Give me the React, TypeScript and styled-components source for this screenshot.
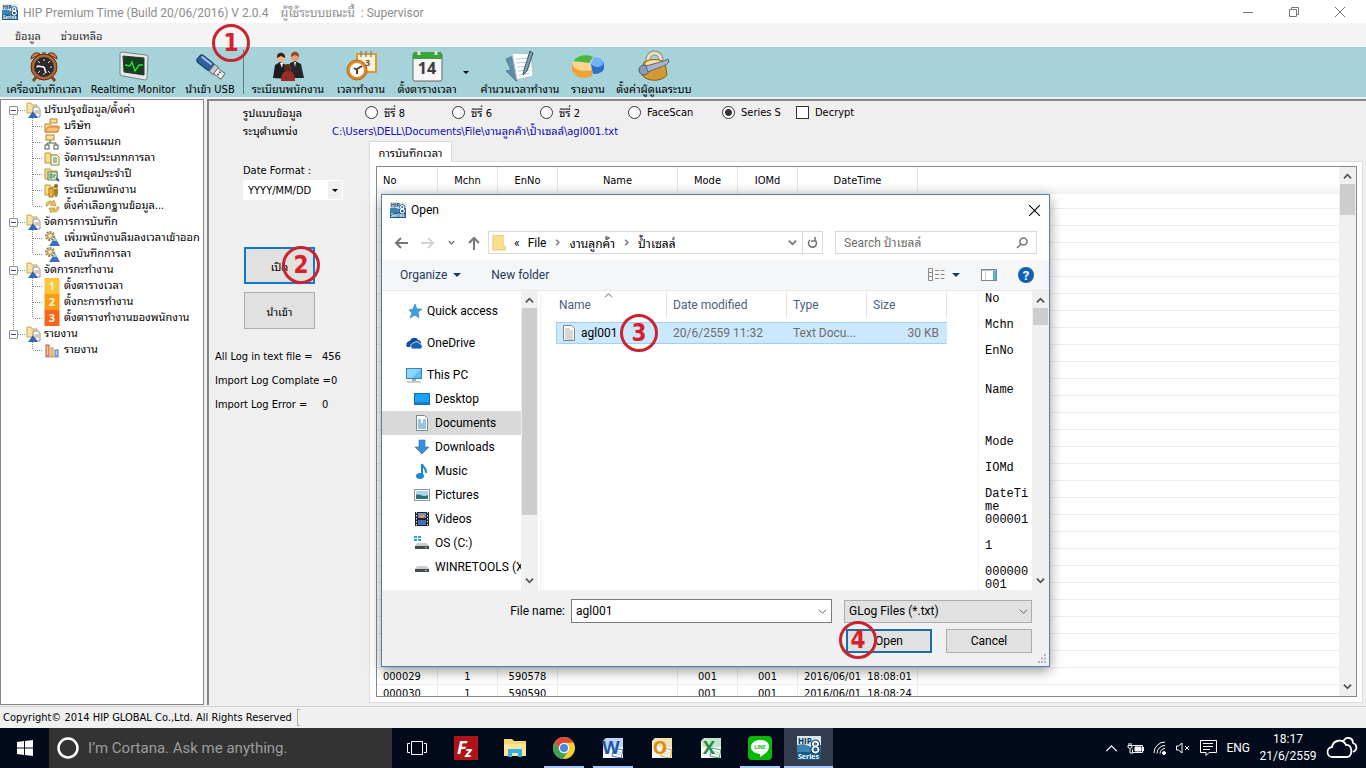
import React, { ReactNode } from "react";
import styled, { createGlobalStyle, css } from "styled-components";

const tahoma = `"DejaVu Sans Condensed", Tahoma, "Noto Sans Thai Looped", Loma, Waree, sans-serif`;
const segoe = `Roboto, "Segoe UI", "Noto Sans Thai Looped", Loma, Waree, sans-serif`;

const GlobalStyle = createGlobalStyle`
  * { box-sizing: border-box; }
  body { margin: 0; font-family: ${tahoma}; font-size: 11px; color: #000; background: #f0f0f0; }
  button, input, select { font: inherit; color: inherit; margin: 0; }
  ul { list-style: none; margin: 0; padding: 0; }
  svg { display: block; flex: none; }
`;

/* ---------- application frame ---------- */

const Desktop = styled.div`
  position: relative;
  display: flex;
  flex-direction: column;
  height: 100vh;
  min-height: 600px;
  overflow: hidden;
`;

const TitleBar = styled.header`
  display: flex;
  align-items: center;
  height: 23px;
  padding-left: 2px;
  gap: 5px;
  background: #fff;
  color: #8c8c8c;
  font-family: ${segoe};
  font-size: 12px;
  white-space: pre;
`;

const WindowButtons = styled.div`
  display: flex;
  margin-left: auto;
  padding-right: 3px;
`;

const WindowButton = styled.button`
  display: grid;
  place-items: center;
  width: 46px;
  height: 23px;
  padding: 0;
  border: 0;
  background: none;
`;

const MenuBar = styled.nav`
  display: flex;
  align-items: center;
  height: 24px;
  padding-left: 15px;
  gap: 20px;
  background: #f4f4f4;
`;

const MenuItem = styled.button`
  padding: 0;
  border: 0;
  background: none;
  color: #333;
  white-space: nowrap;
`;

const ToolBar = styled.div`
  display: flex;
  height: 50px;
  background: #a5d3d9;
`;

const Tool = styled.button<{ $w: number }>`
  position: relative;
  display: flex;
  flex-direction: column;
  align-items: center;
  flex: none;
  width: ${(p) => p.$w}px;
  height: 50px;
  padding: 3px 0 0;
  gap: 1px;
  border: 0;
  background: none;
  line-height: 14px;
  white-space: nowrap;
`;

const ToolSeparator = styled.div`
  width: 1px;
  margin: 3px 1px;
  background: #5c7f84;
`;

const ToolArrow = styled.button`
  width: 10px;
  height: 50px;
  padding: 0;
  border: 0;
  background: none;
`;

const Badge = styled.span<{ $x: number; $y: number }>`
  position: absolute;
  left: ${(p) => p.$x}px;
  top: ${(p) => p.$y}px;
  display: grid;
  place-items: center;
  width: 38px;
  height: 38px;
  border: 3px solid #c9242f;
  border-radius: 50%;
  color: #d8202a;
  font: bold 24px/30px "DejaVu Sans Condensed", sans-serif;
  z-index: 5;
`;

const Workspace = styled.div`
  display: flex;
  flex: 1;
  min-height: 0;
  gap: 3px;
  padding-top: 2px;
`;

const Side = styled.aside`
  flex: none;
  width: 204px;
  overflow: hidden;
  padding-top: 2px;
  background: #fff;
  border: 1px solid #828790;
`;

/* ---------- tree ---------- */

const dotsV = "repeating-linear-gradient(to bottom, #8c8c8c 0 1px, transparent 1px 2px)";
const dotsH = "repeating-linear-gradient(to right, #8c8c8c 0 1px, transparent 1px 2px)";

const TreeRow = styled.li<{ $child?: boolean }>`
  display: flex;
  align-items: center;
  height: 16px;
  line-height: 16px;
  white-space: nowrap;
  svg { margin-right: ${(p) => (p.$child ? 4 : 3)}px; }
`;

const Trunk = styled.span<{ $end?: boolean; $none?: boolean; $start?: boolean }>`
  display: grid;
  align-items: center;
  flex: none;
  width: 24px;
  height: 16px;
  padding-left: 8px;
  background: ${(p) => (p.$none ? "none" : `${dotsV} 12px ${p.$start ? 8 : 0}px / 1px ${p.$end ? 8 : 16}px no-repeat, ${dotsH} 17px 8px / ${p.$start !== undefined ? 7 : 0}px 1px no-repeat`)};
`;

const Branch = styled.span<{ $last?: boolean }>`
  flex: none;
  width: 19px;
  height: 16px;
  background: ${dotsV} 7px 0 / 1px ${(p) => (p.$last ? 8 : 16)}px no-repeat, ${dotsH} 8px 8px / 10px 1px no-repeat;
`;

const Toggle = styled.button`
  display: grid;
  place-items: center;
  width: 9px;
  height: 9px;
  padding: 0;
  border: 1px solid #919191;
  border-radius: 1px;
  background: #fff;
  &::before { content: ""; width: 5px; height: 1px; background: #3a4a78; }
`;

/* ---------- import panel ---------- */

const MainPanel = styled.main`
  display: flex;
  flex-direction: column;
  flex: 1;
  min-width: 0;
  border: solid #828790;
  border-width: 2px 0 0 2px;
  background: #efefef;
`;

const OptionRow = styled.div`
  display: flex;
  align-items: center;
  height: 22px;
  padding-left: 34px;
`;

const RowTitle = styled.span<{ $w: number }>`
  flex: none;
  width: ${(p) => p.$w}px;
  white-space: nowrap;
`;

const Choice = styled.label<{ $w: number }>`
  display: flex;
  align-items: center;
  gap: 6px;
  flex: none;
  width: ${(p) => p.$w}px;
  white-space: nowrap;
`;

const Radio = styled.input`
  appearance: none;
  width: 13px;
  height: 13px;
  border: 1px solid #333;
  border-radius: 50%;
  background: #fff;
  &:checked { background: radial-gradient(circle, #333 0 3px, #fff 4px); }
`;

const Check = styled.input`
  appearance: none;
  width: 13px;
  height: 13px;
  border: 1px solid #333;
  background: #fff;
`;

const PathRow = styled.div`
  display: flex;
  align-items: center;
  height: 14px;
  padding-left: 34px;
  white-space: nowrap;
`;

const PathText = styled.span`
  color: #0a0ab4;
`;

const Columns = styled.div`
  display: flex;
  flex: 1;
  min-height: 0;
  padding-top: 4px;
`;

const Controls = styled.section`
  display: flex;
  flex-direction: column;
  flex: none;
  width: 160px;
  padding: 23px 0 0 34px;
`;

const DateSelect = styled.select`
  appearance: none;
  width: 100px;
  height: 20px;
  margin: 3px 0 47px;
  padding: 0 4px;
  border: 1px solid #fff;
  border-radius: 0;
  background: linear-gradient(to right, transparent 84px, #f0f0f0 84px) #fff;
`;

const SelectWrap = styled.span`
  position: relative;
  display: flex;
  svg { position: absolute; pointer-events: none; }
`;

const BigButton = styled.button<{ $focus?: boolean }>`
  position: relative;
  width: 71px;
  height: 37px;
  margin: 0 0 8px 1px;
  padding: 0;
  border: ${(p) => (p.$focus ? "2px solid #0f78d0" : "1px solid #adadad")};
  background: #e1e1e1;
  white-space: nowrap;
`;

const Stats = styled.div`
  display: flex;
  flex-direction: column;
  gap: 10px;
  margin: 13px 0 0 -28px;
  line-height: 14px;
`;

const Stat = styled.div`
  display: flex;
  white-space: pre;
  span { min-width: 107px; }
`;

const TabArea = styled.section`
  display: flex;
  flex-direction: column;
  flex: 1;
  min-width: 0;
  padding-right: 3px;
`;

const Tab = styled.button`
  align-self: flex-start;
  width: 83px;
  height: 21px;
  padding: 0;
  margin-bottom: -1px;
  border: 1px solid #d9d9d9;
  border-bottom: 0;
  background: #fff;
  white-space: nowrap;
  z-index: 1;
`;

const TabBody = styled.div`
  flex: 1;
  min-height: 0;
  padding: 4px 5px 5px 6px;
  border: 1px solid #dcdcdc;
  background: #fff;
  display: flex;
  margin-bottom: 2px;
`;

const GridBox = styled.div`
  display: flex;
  flex: 1;
  min-width: 0;
  border: 1px solid #828790;
  background: #fff;
  overflow: hidden;
`;

const GridScroll = styled.div`
  flex: 1;
  min-width: 0;
  overflow: hidden;
`;

const LogTable = styled.table`
  width: 100%;
  table-layout: fixed;
  border-collapse: separate;
  border-spacing: 0;
  th {
    height: 27px;
    padding: 0 6px;
    border-right: 1px solid #e2e2e2;
    background: linear-gradient(#fff 60%, #f1f1f1);
    font-weight: normal;
    text-align: center;
  }
  td {
    height: 17px;
    padding: 1px 6px 0;
    border-right: 1px solid #ececec;
    border-bottom: 1px solid #ececec;
    line-height: 15px;
    text-align: center;
    white-space: pre;
  }
  tbody tr:first-child td { height: 15px; }
  th:first-child, td:first-child { text-align: left; }
  th:last-child, td:last-child { border-right: 0; }
`;

const ScrollTrack = styled.div`
  display: flex;
  flex-direction: column;
  align-items: center;
  flex: none;
  width: 17px;
  background: #f0f0f0;
  padding: 5px 0;
`;

const Thumb = styled.div<{ $h: number }>`
  width: 15px;
  height: ${(p) => p.$h}px;
  margin: 3px 0 auto;
  background: #cdcdcd;
`;

const StatusBar = styled.footer`
  display: flex;
  align-items: center;
  height: 22px;
  margin-top: 1px;
  padding-left: 3px;
  border-top: 1px solid #d0d0d0;
  white-space: nowrap;
  &::after { content: ""; width: 2px; height: 15px; margin-left: 5px; border: solid #aaa; border-width: 1px 0 1px 1px; }
`;

/* ---------- open dialog ---------- */

const Dialog = styled.section`
  position: absolute;
  left: 381px;
  top: 194px;
  display: flex;
  flex-direction: column;
  width: 669px;
  height: 473px;
  border: 1px solid #4f7fb8;
  background: #fff;
  box-shadow: 0 4px 12px rgba(0, 0, 0, 0.4);
  font-family: ${segoe};
  font-size: 12px;
  z-index: 3;
`;

const DialogTitle = styled.div`
  display: flex;
  align-items: center;
  height: 30px;
  padding: 0 9px 0 8px;
  gap: 5px;
`;

const PlainButton = styled.button`
  display: flex;
  align-items: center;
  gap: 6px;
  padding: 0;
  border: 0;
  background: none;
  white-space: nowrap;
`;

const CloseButton = styled(PlainButton)`
  margin-left: auto;
`;

const NavRow = styled.div`
  display: flex;
  align-items: center;
  height: 35px;
  padding: 0 12px;
`;

const NavArrows = styled.div`
  display: flex;
  align-items: center;
  width: 94px;
  gap: 13px;
`;

const AddressBar = styled.div`
  display: flex;
  align-items: center;
  flex: 1;
  height: 23px;
  padding-left: 3px;
  gap: 8px;
  border: 1px solid #d9d9d9;
  white-space: nowrap;
`;

const AddressTail = styled.div`
  display: flex;
  align-items: center;
  height: 21px;
  margin-left: auto;
  button { width: 20px; height: 21px; justify-content: center; }
  button + button { border-left: 1px solid #d9d9d9; }
`;

const SearchBox = styled.label`
  display: flex;
  align-items: center;
  width: 202px;
  height: 23px;
  margin-left: 12px;
  padding: 0 8px;
  border: 1px solid #d9d9d9;
  input { flex: 1; min-width: 0; padding: 0; border: 0; outline: 0; background: none; }
  input::placeholder { color: #6d6d6d; opacity: 1; }
`;

const CommandBar = styled.div`
  display: flex;
  align-items: center;
  height: 31px;
  padding: 0 15px 0 18px;
  gap: 30px;
  background: #f5f6f7;
  border-bottom: 1px solid #e8e8e8;
  color: #1e395b;
`;

const CommandIcons = styled.div`
  display: flex;
  align-items: center;
  margin-left: auto;
  gap: 21px;
`;

const DialogBody = styled.div`
  display: flex;
  flex: 1;
  min-height: 0;
`;

const Places = styled.ul`
  flex: none;
  width: 139px;
  padding-top: 8px;
  overflow: hidden;
`;

const Place = styled.li<{ $sub?: boolean; $on?: boolean; $gap?: boolean }>`
  display: flex;
  align-items: center;
  height: 24px;
  margin-bottom: ${(p) => (p.$gap ? 8 : 0)}px;
  padding-left: ${(p) => (p.$sub ? 32 : 24)}px;
  gap: 5px;
  background: ${(p) => (p.$on ? "#d9d9d9" : "none")};
  white-space: nowrap;
`;

const FilesPane = styled.div`
  flex: 1;
  min-width: 0;
  margin-left: 2px;
  padding-left: 15px;
  border-left: 1px solid #f0f0f0;
`;

const FileTable = styled.table`
  width: 391px;
  table-layout: fixed;
  border-collapse: separate;
  border-spacing: 0;
  th {
    position: relative;
    height: 27px;
    padding: 0 6px;
    border-right: 1px solid #e5e5e5;
    color: #4c607a;
    font-weight: normal;
    text-align: left;
  }
  th:first-child { padding-left: 3px; }
  th svg { position: absolute; left: 48px; top: 0; }
  tbody::before { content: ""; display: block; height: 4px; }
`;

const FileCell = styled.td<{ $pos?: "first" | "last"; $dark?: boolean }>`
  position: relative;
  height: 22px;
  padding: 0 6px;
  border: solid #99d1ff;
  border-width: 1px 0;
  ${(p) => p.$pos === "first" && css`border-left-width: 1px; padding-left: 4px;`}
  ${(p) => p.$pos === "last" && css`text-align: right; padding-right: 8px;`}
  background: #cce8ff;
  color: ${(p) => (p.$dark ? "#000" : "#6d6d6d")};
  white-space: nowrap;
`;

const FileName = styled.span`
  display: flex;
  align-items: center;
  gap: 4px;
`;

const Preview = styled.pre`
  flex: none;
  width: 54px;
  margin: 0;
  padding: 2px 0 0 6px;
  border-left: 1px solid #f0f0f0;
  overflow: hidden;
  font: 12px/13px "Liberation Mono", monospace;
`;

const DialogFooter = styled.div`
  position: relative;
  display: grid;
  grid-template-columns: 1fr 261px 188px;
  column-gap: 12px;
  row-gap: 6px;
  align-items: center;
  align-content: start;
  height: 76px;
  padding: 9px 17px 0 0;
  background: #f0f0f0;
`;

const FieldLabel = styled.label`
  justify-self: end;
  margin-right: -6px;
`;

const Combo = styled.div`
  display: flex;
  align-items: center;
  height: 24px;
  padding-right: 4px;
  border: 1px solid #7a7a7a;
  background: #fff;
  input { flex: 1; min-width: 0; height: 20px; padding: 0 4px; border: 0; outline: 0; background: none; }
`;

const TypeSelect = styled.select`
  appearance: none;
  width: 188px;
  height: 23px;
  padding: 0 4px;
  border: 1px solid #adadad;
  border-radius: 0;
  background: #e1e1e1;
`;

const DialogActions = styled.div`
  grid-column: 3;
  display: flex;
  justify-content: flex-end;
  gap: 14px;
`;

const DialogButton = styled.button<{ $main?: boolean }>`
  position: relative;
  width: 86px;
  height: 24px;
  padding: 0;
  border: ${(p) => (p.$main ? "2px solid #1a6ea8" : "1px solid #adadad")};
  background: #e1e1e1;
`;

const Grip = styled.span`
  position: absolute;
  right: 2px;
  bottom: 2px;
`;

/* ---------- task bar ---------- */

const TaskBar = styled.footer`
  display: flex;
  flex: none;
  height: 40px;
  background: #020a1c;
  color: #fff;
  font-family: ${segoe};
`;

const TaskButton = styled.button<{ $active?: boolean; $running?: boolean }>`
  display: grid;
  place-items: center;
  flex: none;
  width: 49px;
  height: 40px;
  padding: 0;
  border: 0;
  background: ${(p) =>
    p.$active
      ? "linear-gradient(to top, #a9c9f5 2px, #333d4f 2px)"
      : p.$running
      ? "linear-gradient(#a9c9f5, #a9c9f5) center bottom / 40px 2px no-repeat"
      : "none"};
`;

const Cortana = styled.label`
  display: flex;
  align-items: center;
  flex: none;
  width: 343px;
  padding-left: 8px;
  gap: 9px;
  background: #333;
  font-size: 15px;
  input { flex: 1; min-width: 0; border: 0; padding: 0; outline: 0; background: none; }
  input::placeholder { color: #9c9c9c; opacity: 1; }
`;

const Tray = styled.div`
  display: flex;
  align-items: center;
  margin-left: auto;
  padding-right: 8px;
  gap: 9px;
  font-size: 12px;
`;

const Clock = styled.time`
  width: 58px;
  line-height: 17px;
  text-align: center;
`;

/* ---------- icons ---------- */

const HipIcon = ({ size = 16 }: { size?: number }) => (
  <svg width={size} height={size} viewBox="0 0 24 24">
    <rect width="24" height="24" fill="#155a8c" />
    <path d="M0 0h24v9c-9 0-10 7-24 6z" fill="#d8e8f2" />
    <path d="M0 9c8-2 10 0 14 2s7 1 10 0v5H0z" fill="#3d84b4" />
    <text x="1" y="8" fontFamily="Open Sans, sans-serif" fontWeight="bold" fontSize="8" fill="#0b2f52">HIP</text>
    <g fill="none" strokeLinecap="round">
      <path d="M18.500 5.500a2.500 2.500 0 1 1-.1 0zM18.500 10.500a3 3 0 1 1-.1 0z" stroke="#0b3d66" strokeWidth="4" />
      <path d="M18.500 5.500a2.500 2.500 0 1 1-.1 0zM18.500 10.500a3 3 0 1 1-.1 0z" stroke="#fff" strokeWidth="2" />
    </g>
    <text x="1" y="23" fontFamily="Open Sans, sans-serif" fontWeight="bold" fontSize="7" fill="#fff">Series</text>
  </svg>
);

const Chevron = ({ dir = "down", color = "#555", size = 9, w = 2 }: { dir?: "up" | "down" | "right"; color?: string; size?: number; w?: number }) => (
  <svg width={size} height={size} viewBox="0 0 10 10" fill="none" stroke={color} strokeWidth={w}>
    <path d={dir === "up" ? "M1 7l4-4 4 4" : dir === "down" ? "M1 3l4 4 4-4" : "M3 1l4 4-4 4"} />
  </svg>
);

const Caret = ({ color = "#000", w = 6 }: { color?: string; w?: number }) => (
  <svg width={w} height={w / 2} viewBox="0 0 6 3"><path d="M0 0h6L3 3z" fill={color} /></svg>
);

const Cross = ({ size, color }: { size: number; color: string }) => (
  <svg width={size} height={size} viewBox="0 0 10 10" stroke={color} fill="none"><path d="M0 0l10 10M10 0L0 10" /></svg>
);

const toolIcons: Record<string, ReactNode> = {
  clock: (
    <svg width="32" height="32" viewBox="0 0 32 32">
      <path d="M9 26l-4 5M23 26l4 5" stroke="#8a4a24" strokeWidth="3" />
      <path d="M3 9c0-5 5-8 9-5zM29 9c0-5-5-8-9-5z" fill="#c9804c" stroke="#653417" />
      <path d="M14 2h4v3h-4z" fill="#777" />
      <circle cx="16" cy="17" r="13" fill="#b5652f" stroke="#5c2b12" />
      <circle cx="16" cy="17" r="10" fill="#2b2b2e" />
      <path d="M16 9v2M16 23v2M8 17h2M22 17h2M10 11l2 2M22 11l-2 2M10 23l2-2M22 23l-2-2" stroke="#ddd" />
      <path d="M16 17l-7-1M16 17l2 6" stroke="#fff" strokeWidth="1.600" />
    </svg>
  ),
  monitor: (
    <svg width="32" height="32" viewBox="0 0 32 32">
      <path d="M5 2l24 3q2 0 2 2l-1 21q0 2-2 2L6 26q-3 0-3-2L3 4q0-2 2-2z" fill="#e4e8ea" stroke="#7b8184" />
      <path d="M6 6l21 2 0 17-20-3z" fill="#163f20" stroke="#333" />
      <path d="M8 15l5 1 2-4 3 9 4-6 4 0" fill="none" stroke="#27e03a" strokeWidth="1.400" />
    </svg>
  ),
  usb: (
    <svg width="32" height="32" viewBox="0 0 32 32">
      <g transform="rotate(38 16 17)">
        <rect x="1" y="12" width="17" height="9" rx="3" fill="#2f5f9f" stroke="#1a3b6d" />
        <path d="M3 14h13" stroke="#9fc0e8" strokeWidth="2" />
        <rect x="18" y="12" width="5" height="9" fill="#c8ccd0" stroke="#777" />
        <rect x="23" y="13" width="9" height="7" fill="#f2f4f5" stroke="#777" />
        <path d="M26 15h2M26 18h2" stroke="#555" strokeWidth="1.500" />
      </g>
    </svg>
  ),
  people: (
    <svg width="32" height="32" viewBox="0 0 32 32">
      <circle cx="9" cy="8" r="4" fill="#f0b48c" /><path d="M5 8c-1-7 9-7 8 0l-4-2z" fill="#3a2013" />
      <circle cx="23" cy="7" r="4" fill="#e8a070" /><path d="M19 7c-1-7 9-7 8 0l-4-2z" fill="#9c4a20" />
      <path d="M1 28l2-13 5-3 6 3 2 14z" fill="#1c1c20" /><path d="M17 28l1-15 5-2 6 3 3 14z" fill="#24242a" />
      <path d="M8 13l2 5 1-5zM22 12l1 5 1-5z" fill="#fff" />
      <circle cx="16" cy="18" r="4" fill="#5a2c1c" /><path d="M9 31c0-8 3-10 7-10s7 2 7 10z" fill="#962c22" />
    </svg>
  ),
  time: (
    <svg width="32" height="32" viewBox="0 0 32 32">
      <rect x="12" y="4" width="19" height="18" fill="#fff4d6" stroke="#d89b38" strokeWidth="2" />
      <path d="M16 1v6M21 1v6M26 1v6" stroke="#888" strokeWidth="1.500" />
      <text x="20" y="16" fontSize="9" fontWeight="bold" fontFamily="Open Sans, sans-serif" fill="#555">3</text>
      <circle cx="12" cy="20" r="10" fill="#e08a2c" stroke="#b26518" /><circle cx="12" cy="20" r="7" fill="#fff" />
      <path d="M12 24l0-5 5-3M12 20l-3-2" stroke="#444" strokeWidth="2" fill="none" />
    </svg>
  ),
  calendar: (
    <svg width="32" height="32" viewBox="0 0 32 32">
      <rect x="2" y="3" width="29" height="28" rx="2" fill="#f6f6f6" stroke="#666" />
      <path d="M2 9V4q0-2 2-2h25q2 0 2 2v5z" fill="#3aa33a" />
      <path d="M8 1v4M25 1v4" stroke="#ddd" strokeWidth="3" />
      <text x="16" y="24" textAnchor="middle" fontSize="16" fontWeight="bold" fontFamily="Open Sans, sans-serif" fill="#3c3c3c">14</text>
    </svg>
  ),
  notes: (
    <svg width="32" height="32" viewBox="0 0 32 32">
      <path d="M2 9l12-5 4 24-6 3-10-10 5-1z" fill="#5f8fa8" stroke="#3c6b85" strokeWidth=".7" />
      <path d="M8 3l19 1 2 22-16 4z" fill="#fff" stroke="#b5c1c8" />
      <path d="M12 9l13-1M12 13l13-1M13 17l13-1M14 21l12-1M15 25l11-2" stroke="#b5ccd8" />
      <path d="M26 1l-6 19-1 5 4-4L29 3z" fill="#7d9db5" stroke="#38556b" />
    </svg>
  ),
  pie: (
    <svg width="32" height="32" viewBox="0 0 32 32">
      <path d="M0 13v7c3 9 14 9 20 6v-8z" fill="#eea23c" /><path d="M0 12c1 9 12 10 20 8l-3-8z" fill="#ffd490" />
      <path d="M2 11c3-6 14-7 19-4l-4 6z" fill="#4db63e" />
      <path d="M19 14l13-2v7c-2 4-6 5-11 5z" fill="#2c6fc9" /><path d="M19 14l3-7c9 0 12 7 7 9-3 2-7 1-10-2z" fill="#70b2f5" />
    </svg>
  ),
  admin: (
    <svg width="32" height="32" viewBox="0 0 32 32">
      <path d="M10 12C9 0 24 0 23 12" fill="none" stroke="#8b8b80" strokeWidth="5" />
      <path d="M10 12C9 0 24 0 23 12" fill="none" stroke="#e9e0c0" strokeWidth="3" />
      <path d="M6 12q10-5 21 0l2 13c-5 7-20 7-25 0z" fill="#d49a32" stroke="#8a5a12" />
      <path d="M8 12q8-4 17 0l1 5H7z" fill="#f9e2a0" />
      <circle cx="6" cy="20" r="5" fill="#8d9bb5" stroke="#4d5a75" /><path d="M8 16l18-5 4-2 1 3-3 3-18 7z" fill="#aab3c4" stroke="#5a6478" />
    </svg>
  ),
};

const Folder = () => <path d="M1 3h5l1 2h6v8H1z" fill="#f7dc8a" stroke="#c79435" />;

const treeIcons: Record<string, ReactNode> = {
  root: <><path d="M2 1h4l1 2h5v8H2z" fill="#f9e3a0" stroke="#d0a050" /><path d="M8 5h5l2 2v8H8z" fill="#f2f5fb" stroke="#8a94a8" /><path d="M10 9h4M10 11h4" stroke="#d99a40" /><path d="M8 9l5 7H3z" fill="#3568b4" /></>,
  company: <><rect x="6" y="1" width="7" height="4" fill="#fbe08a" stroke="#b8862c" /><path d="M1 6h5l1 2h7v6H1z" fill="#f9dd90" stroke="#c98030" /><path d="M1 14l3-5h12l-3 5z" fill="#fbc070" stroke="#c98030" /></>,
  dept: <><rect x="2" y="1" width="8" height="5" fill="#fbe38a" stroke="#a8863c" /><path d="M6 6v3M3 11V9h9v2" stroke="#555" fill="none" /><rect x="1" y="11" width="4" height="4" fill="#fff" stroke="#555" /><rect x="10" y="11" width="4" height="4" fill="#fff" stroke="#555" /></>,
  leave: <><Folder /><path d="M7 5h6l2 2v8H7z" fill="#fffbe0" stroke="#8a8448" /><path d="M9 8h4M9 10h4M9 12h4" stroke="#3f8a48" /></>,
  holiday: <><Folder /><rect x="4" y="6" width="9" height="8" fill="#e4f4e4" stroke="#52834f" /><path d="M6 8h2v4H6zM9 9h3M9 11h2" stroke="#2e7a3a" fill="none" /><path d="M12 12l3 3" stroke="#36609c" strokeWidth="2" /></>,
  staff: <><Folder /><path d="M5 6h4v9H5z" fill="#efb63c" stroke="#a8701c" /><circle cx="12" cy="4" r="2" fill="#8a6a20" /><path d="M10 7h4v4l-1 4h-2l-1-4z" fill="#a8822c" /></>,
  db: <path d="M2 8c0-5 4-6 7-4l1-2 2 6-6-1 2-2C5 5 4 6 4 8zM15 9c0 5-4 6-7 4l-1 2-2-5 6 0-2 2c3 0 4-1 4-3z" fill="#f2c55c" stroke="#b88a30" strokeWidth=".7" />,
  gear: <><circle cx="6" cy="6" r="4" fill="none" stroke="#a08448" strokeWidth="2" strokeDasharray="2 1" /><circle cx="6" cy="6" r="2.500" fill="#fff2c8" stroke="#a08448" /><path d="M11 7l5 9H5z" fill="#3d6fb8" /><path d="M11 7l2 4H9z" fill="#a8c4e8" /></>,
  chart: <><path d="M1 15h14" stroke="#999" /><rect x="2" y="3" width="3" height="11" fill="#f4c0a8" stroke="#c05030" /><rect x="7" y="6" width="2" height="8" fill="#fde4a0" stroke="#c89038" /><rect x="11" y="8" width="3" height="6" fill="#c0d0f0" stroke="#5570b0" /></>,
};

const numberColors: Record<string, string> = { "1": "#fdc53a", "2": "#fb9a14", "3": "#f3661c" };

const TreeIcon = ({ name }: { name: string }) => (
  <svg width="16" height="16" viewBox="0 0 16 16">
    {treeIcons[name] ?? (
      <>
        <rect width="15" height="16" x=".5" fill={numberColors[name]} />
        <text x="8" y="12" textAnchor="middle" fontSize="11" fontFamily="Open Sans, sans-serif" fontWeight="bold" fill="#fff4d8">{name}</text>
      </>
    )}
  </svg>
);

const placeIcons: Record<string, ReactNode> = {
  star: <path d="M9 1l2 5 5 0-4 3 1 6-4-3-5 3 2-5-3-3 4-1z" fill="#3a9fe0" stroke="#1f7fc4" strokeWidth=".6" />,
  cloud: <><path d="M1 12c-2-4 1-6 3-6 1-4 7-4 8-1 2 0 3 2 3 3v4z" fill="#0f4fa0" /><path d="M6 14c-3-4 0-6 2-6 1-2 5-2 6 1 3 0 3 5 0 5z" fill="#1a5fb8" stroke="#fff" strokeWidth=".8" /></>,
  pc: <><rect x=".5" y="1.500" width="15" height="10" fill="#5cc0f8" stroke="#3a85b8" /><path d="M1 2h14L6 11H1z" fill="#8bd6ff" /><path d="M6 12h4v2H6z" fill="#9ab" /><path d="M1 15h14" stroke="#99a" /></>,
  desktop: <><rect x=".5" y="2.500" width="15" height="11" fill="#1ea0f4" stroke="#0c6fb8" /><path d="M1 12h14" stroke="#0c5f9c" /></>,
  doc: <><path d="M2.500 .5h8l3 3v12h-11z" fill="#fff" stroke="#7b8790" /><path d="M4 5h3M4 7h3M4 9h8M4 11h8M4 13h8M9 5h3M9 7h3" stroke="#2e8ab8" /></>,
  down: <path d="M5 1h6v7h4l-7 7-7-7h4z" fill="#3a8fd8" stroke="#2a72b4" strokeWidth=".6" />,
  music: <><ellipse cx="6" cy="13" rx="4" ry="3" fill="#1a88d8" /><path d="M8 13V1c1 4 5 4 4 9" fill="none" stroke="#1a88d8" strokeWidth="2" /></>,
  pic: <><rect x=".5" y="2.500" width="15" height="11" fill="#fff" stroke="#8796a4" /><path d="M2 4h12v8H2z" fill="#a8d4ee" /><path d="M2 8c4-2 6 3 12 0v4H2z" fill="#2f6f78" /></>,
  video: <><rect x="1" y="1" width="14" height="14" fill="#222" /><path d="M4 2h8v5H4z" fill="#6a8fd8" /><path d="M4 9h8v5H4z" fill="#3d6cc0" /><path d="M6 4h4v3H6z" fill="#d8a03c" /><path d="M2.500 1v14M13.500 1v14" stroke="#ddd" strokeDasharray="1.500 1.500" /></>,
  os: <><path d="M0 1h3v2H0zM4 1h3v2H4zM0 4h3v2H0zM4 4h3v2H4z" fill="#1fa8e8" /><path d="M3 8h10l2 3H1z" fill="#c9cdd0" /><path d="M1 11h14v3H1z" fill="#44494d" /><path d="M11 12.500h2" stroke="#5ee04c" /></>,
  drive: <><path d="M3 7h10l2 3H1z" fill="#c9cdd0" /><path d="M1 10h14v3H1z" fill="#44494d" /><path d="M11 11.500h2" stroke="#bbb" /></>,
};

const PlaceIcon = ({ name }: { name: string }) => <svg width="16" height="16" viewBox="0 0 16 16">{placeIcons[name]}</svg>;

const NavArrow = ({ d, color, w = 14 }: { d: string; color: string; w?: number }) => (
  <svg width={w} height="14" viewBox={`0 0 ${w} 14`} fill="none" stroke={color} strokeWidth="2"><path d={d} /></svg>
);

const OfficeIcon = ({ letter, color, pale }: { letter: string; color: string; pale: string }) => (
  <svg width="24" height="24" viewBox="0 0 24 24">
    <path d="M5 2h17v20H2V5z" fill="#f5f7fa" /><path d="M3 4l3-2h16v9H3z" fill={pale} opacity=".6" />
    <path d="M13 12l9 2-2 8-9-2z" fill="#fff" stroke={color} strokeWidth=".8" /><path d="M15 15l5 2M14 17l5 2" stroke={pale} />
    <text x="10" y="18" textAnchor="middle" fontSize="18" fontWeight="bold" fontFamily="Open Sans, sans-serif" fill={color}>{letter}</text>
  </svg>
);

/* ---------- data ---------- */

type TreeNode = { icon: string; text: string };
const tree: { text: string; items: TreeNode[] }[] = [
  { text: "ปรับปรุงข้อมูล/ตั้งค่า", items: [
    { icon: "company", text: "บริษัท" }, { icon: "dept", text: "จัดการแผนก" }, { icon: "leave", text: "จัดการประเภทการลา" },
    { icon: "holiday", text: "วันหยุดประจำปี" }, { icon: "staff", text: "ระเบียนพนักงาน" }, { icon: "db", text: "ตั้งค่าเลือกฐานข้อมูล..." } ] },
  { text: "จัดการการบันทึก", items: [{ icon: "gear", text: "เพิ่มพนักงานลืมลงเวลาเข้าออก" }, { icon: "gear", text: "ลงบันทึกการลา" }] },
  { text: "จัดการกะทำงาน", items: [{ icon: "1", text: "ตั้งตารางเวลา" }, { icon: "2", text: "ตั้งกะการทำงาน" }, { icon: "3", text: "ตั้งตารางทำงานของพนักงาน" }] },
  { text: "รายงาน", items: [{ icon: "chart", text: "รายงาน" }] },
];

const logColumns: [string, number | undefined][] = [
  ["No", 61], ["Mchn", 60], ["EnNo", 60], ["Name", 120], ["Mode", 60], ["IOMd", 60], ["DateTime", 120], ["", undefined],
];
const blankRow = Array<string>(8).fill("");
const logRows: string[][] = [
  ...Array.from({ length: 28 }, () => blankRow),
  ["000029", "1", "590578", "", "001", "001", "2016/06/01  18:08:01", ""],
  ["000030", "1", "590590", "", "001", "001", "2016/06/01  18:08:24", ""],
];

const places: { icon: string; text: string; sub?: boolean; on?: boolean; gap?: boolean }[] = [
  { icon: "star", text: "Quick access", gap: true },
  { icon: "cloud", text: "OneDrive", gap: true },
  { icon: "pc", text: "This PC" },
  { icon: "desktop", text: "Desktop", sub: true },
  { icon: "doc", text: "Documents", sub: true, on: true },
  { icon: "down", text: "Downloads", sub: true },
  { icon: "music", text: "Music", sub: true },
  { icon: "pic", text: "Pictures", sub: true },
  { icon: "video", text: "Videos", sub: true },
  { icon: "os", text: "OS (C:)", sub: true },
  { icon: "drive", text: "WINRETOOLS (X:)", sub: true },
];

const previewText = "No\n\nMchn\n\nEnNo\n\n\nName\n\n\n\nMode\n\nIOMd\n\nDateTi\nme\n000001\n\n1\n\n000000\n001";

const VScroll = ({ thumb }: { thumb: number }) => (
  <ScrollTrack><Chevron dir="up" /><Thumb $h={thumb} /><Chevron /></ScrollTrack>
);

/* ---------- sections ---------- */

const Tree = () => (
  <Side>
    <ul>
      {tree.map((group, g) => (
        <React.Fragment key={group.text}>
          <TreeRow>
            <Trunk $start={g === 0} $end={g === tree.length - 1}><Toggle aria-label="Collapse" /></Trunk>
            <TreeIcon name="root" />{group.text}
          </TreeRow>
          {group.items.map((item, i) => (
            <TreeRow key={item.text} $child>
              <Trunk $none={g === tree.length - 1} />
              <Branch $last={i === group.items.length - 1} />
              <TreeIcon name={item.icon} />{item.text}
            </TreeRow>
          ))}
        </React.Fragment>
      ))}
    </ul>
  </Side>
);

const ImportPanel = () => (
  <MainPanel>
    <OptionRow>
      <RowTitle $w={122}>รูปแบบข้อมูล</RowTitle>
      <Choice $w={87}><Radio type="radio" name="format" />ซีรี่ 8</Choice>
      <Choice $w={88}><Radio type="radio" name="format" />ซีรี่ 6</Choice>
      <Choice $w={88}><Radio type="radio" name="format" />ซีรี่ 2</Choice>
      <Choice $w={94}><Radio type="radio" name="format" />FaceScan</Choice>
      <Choice $w={74}><Radio type="radio" name="format" defaultChecked />Series S</Choice>
      <Choice $w={80}><Check type="checkbox" />Decrypt</Choice>
    </OptionRow>
    <PathRow>
      <RowTitle $w={89}>ระบุตำแหน่ง</RowTitle>
      <PathText>C:\Users\DELL\Documents\File\งานลูกค้า\ป้ำเซลล์\agl001.txt</PathText>
    </PathRow>
    <Columns>
      <Controls>
        <label htmlFor="dateFormat">Date Format :</label>
        <SelectWrap>
          <DateSelect id="dateFormat"><option>YYYY/MM/DD</option></DateSelect>
          <svg width="6" height="3" viewBox="0 0 6 3" style={{ left: 89, top: 12 }}><path d="M0 0h6L3 3z" /></svg>
        </SelectWrap>
        <BigButton $focus>เปิด<Badge $x={36} $y={-3}>2</Badge></BigButton>
        <BigButton>นำเข้า</BigButton>
        <Stats>
          <Stat><span>All Log in text file =</span>456</Stat>
          <Stat><span>Import Log Complate =</span>0</Stat>
          <Stat><span>Import Log Error =</span>0</Stat>
        </Stats>
      </Controls>
      <TabArea>
        <Tab>การบันทึกเวลา</Tab>
        <TabBody>
          <GridBox>
            <GridScroll>
              <LogTable>
                <colgroup>{logColumns.map(([n, w]) => <col key={n} width={w} />)}</colgroup>
                <thead><tr>{logColumns.map(([n]) => <th key={n}>{n}</th>)}</tr></thead>
                <tbody>{logRows.map((row, r) => <tr key={r}>{row.map((cell, c) => <td key={c}>{cell}</td>)}</tr>)}</tbody>
              </LogTable>
            </GridScroll>
            <VScroll thumb={31} />
          </GridBox>
        </TabBody>
      </TabArea>
    </Columns>
  </MainPanel>
);

const OpenDialog = () => (
  <Dialog role="dialog" aria-label="Open">
    <DialogTitle><HipIcon />Open<CloseButton aria-label="Close"><Cross size={11} color="#000" /></CloseButton></DialogTitle>
    <NavRow>
      <NavArrows>
        <PlainButton aria-label="Back"><NavArrow d="M14 7H2M7 2L2 7l5 5" color="#777" /></PlainButton>
        <PlainButton aria-label="Forward"><NavArrow d="M0 7h12M7 2l5 5-5 5" color="#d5d5d5" /></PlainButton>
        <PlainButton aria-label="Recent"><Chevron size={7} color="#777" /></PlainButton>
        <PlainButton aria-label="Up"><NavArrow d="M6 14V2M1 7l5-5 5 5" color="#777" w={12} /></PlainButton>
      </NavArrows>
      <AddressBar>
        <svg width="14" height="16" viewBox="0 0 14 16"><path d="M1 0h10v11h2v4H1z" fill="#fbe08c" stroke="#e8c468" /></svg>
        <span>«</span><span>File</span><Chevron dir="right" size={7} color="#777" />
        <span>งานลูกค้า</span><Chevron dir="right" size={7} color="#777" /><span>ป้ำเซลล์</span>
        <AddressTail>
          <PlainButton aria-label="Locations"><Chevron color="#777" /></PlainButton>
          <PlainButton aria-label="Refresh">
            <svg width="11" height="12" viewBox="0 0 11 12" fill="none" stroke="#777" strokeWidth="1.600"><path d="M8 3a4 4 0 1 1-5 0M8 0v4H4" /></svg>
          </PlainButton>
        </AddressTail>
      </AddressBar>
      <SearchBox>
        <input aria-label="Search" placeholder="Search ป้ำเซลล์" />
        <svg width="12" height="12" viewBox="0 0 12 12" fill="none" stroke="#777" strokeWidth="1.600"><circle cx="7.500" cy="4.500" r="3.500" /><path d="M5 7l-4 4" /></svg>
      </SearchBox>
    </NavRow>
    <CommandBar>
      <PlainButton>Organize<Caret color="#1e395b" w={8} /></PlainButton>
      <PlainButton>New folder</PlainButton>
      <CommandIcons>
        <PlainButton aria-label="View">
          <svg width="18" height="14" viewBox="0 0 18 14" fill="none" stroke="#8a8a8a"><path d="M.5.5h4v12h-4zM.5 4.500h4M.5 8.500h4M7 2.500h4M12.500 2.500h4M7 6.500h4M12.500 6.500h4M7 10.500h4M12.500 10.500h4" /></svg>
          <Caret color="#1e395b" w={8} />
        </PlainButton>
        <PlainButton aria-label="Preview pane">
          <svg width="16" height="12" viewBox="0 0 16 12"><rect x=".5" y=".5" width="15" height="11" fill="#fff" stroke="#7d8690" /><path d="M0 1h16" stroke="#7d8690" /><path d="M12 2h3v9h-3z" fill="#55b4d8" /><path d="M4.500 2v9" stroke="#ccc" /></svg>
        </PlainButton>
        <PlainButton aria-label="Help">
          <svg width="16" height="16" viewBox="0 0 16 16"><circle cx="8" cy="8" r="8" fill="#0e62b4" /><text x="8" y="13" textAnchor="middle" fontSize="13" fontWeight="bold" fill="#fff">?</text></svg>
        </PlainButton>
      </CommandIcons>
    </CommandBar>
    <DialogBody>
      <Places>
        {places.map((p) => <Place key={p.text} $sub={p.sub} $on={p.on} $gap={p.gap}><PlaceIcon name={p.icon} />{p.text}</Place>)}
      </Places>
      <VScroll thumb={207} />
      <FilesPane>
        <FileTable>
          <colgroup><col width="111" /><col width="120" /><col width="80" /><col width="80" /></colgroup>
          <thead><tr>
            <th>Name<Chevron dir="up" w={1} /></th><th>Date modified</th><th>Type</th><th>Size</th>
          </tr></thead>
          <tbody><tr>
            <FileCell $pos="first" $dark>
              <FileName>
                <svg width="16" height="16" viewBox="0 0 16 16"><path d="M2.500.5h8l3 3v12h-11z" fill="#fff" stroke="#848484" /><path d="M4 4h5M4 6h8M4 8h8M4 10h8M4 12h8M4 14h8" stroke="#999" strokeWidth=".8" /></svg>
                agl001
              </FileName>
              <Badge $x={63} $y={-9}>3</Badge>
            </FileCell>
            <FileCell>20/6/2559 11:32</FileCell>
            <FileCell>Text Docu...</FileCell>
            <FileCell $pos="last">30 KB</FileCell>
          </tr></tbody>
        </FileTable>
      </FilesPane>
      <Preview>{previewText}</Preview>
      <VScroll thumb={17} />
    </DialogBody>
    <DialogFooter>
      <FieldLabel htmlFor="fileName">File name:</FieldLabel>
      <Combo>
        <input id="fileName" defaultValue="agl001" />
        <PlainButton aria-label="Recent names"><Chevron w={1} /></PlainButton>
      </Combo>
      <SelectWrap>
        <TypeSelect aria-label="File type"><option>GLog Files (*.txt)</option></TypeSelect>
        <svg width="9" height="9" viewBox="0 0 10 10" fill="none" stroke="#555" style={{ right: 4, top: 7 }}><path d="M1 3l4 4 4-4" /></svg>
      </SelectWrap>
      <DialogActions>
        <DialogButton $main>Open<Badge $x={-9} $y={-10}>4</Badge></DialogButton>
        <DialogButton>Cancel</DialogButton>
      </DialogActions>
      <Grip><svg width="10" height="10" viewBox="0 0 10 10" fill="#b8b8b8"><path d="M7 0h2v2H7zM4 3.500h2v2H4zM7 3.500h2v2H7zM1 7h2v2H1zM4 7h2v2H4zM7 7h2v2H7z" /></svg></Grip>
    </DialogFooter>
  </Dialog>
);

const SystemTaskBar = () => (
  <TaskBar>
    <TaskButton aria-label="Start">
      <svg width="16" height="16" viewBox="0 0 16 16" fill="#fff"><path d="M0 2l7-1v6.500H0zM8 1l8-1v7.500H8zM0 8.500h7V15l-7-1zM8 8.500h8V16l-8-1z" /></svg>
    </TaskButton>
    <Cortana>
      <svg width="22" height="22" viewBox="0 0 22 22"><circle cx="11" cy="11" r="9.500" fill="none" stroke="#fff" strokeWidth="2.500" /></svg>
      <input aria-label="Search" placeholder="I’m Cortana. Ask me anything." />
    </Cortana>
    <TaskButton aria-label="Task view">
      <svg width="20" height="14" viewBox="0 0 20 14" fill="none" stroke="#fff"><path d="M4.500.5h11v13h-11zM3 2.500H.5v9H3M17 2.500h2.500v9H17" /></svg>
    </TaskButton>
    <TaskButton aria-label="FileZilla">
      <svg width="24" height="24" viewBox="0 0 24 24"><rect width="24" height="24" fill="#b01218" /><text x="3" y="18" fontSize="18" fontStyle="italic" fontWeight="bold" fontFamily="Open Sans, sans-serif" fill="#fff">F</text><text x="11" y="21" fontSize="15" fontStyle="italic" fontWeight="bold" fontFamily="Open Sans, sans-serif" fill="#fff">z</text></svg>
    </TaskButton>
    <TaskButton aria-label="Explorer">
      <svg width="22" height="20" viewBox="0 0 22 20"><path d="M0 1h8l2 2h12v15H0z" fill="#f6d873" /><path d="M0 6h22v12H0z" fill="#fbe79c" /><path d="M4 11h14v8h-4v-4H8v4H4z" fill="#36b0e4" /></svg>
    </TaskButton>
    <TaskButton aria-label="Chrome" $running>
      <svg width="22" height="22" viewBox="0 0 22 22"><circle cx="11" cy="11" r="11" fill="#f6cf36" /><path d="M1.500 5.500A11 11 0 0 1 20.500 5.500L11 6 7 13z" fill="#dc4a3c" /><path d="M1.500 5.500A11 11 0 0 0 10 22l5-8-8-.5z" fill="#3da255" /><circle cx="11" cy="11" r="5.200" fill="#fff" /><circle cx="11" cy="11" r="4" fill="#4a86e8" /></svg>
    </TaskButton>
    <TaskButton aria-label="Word" $running><OfficeIcon letter="W" color="#1f57a8" pale="#9cc0ec" /></TaskButton>
    <TaskButton aria-label="Outlook"><OfficeIcon letter="O" color="#d98a12" pale="#f8d27c" /></TaskButton>
    <TaskButton aria-label="Excel"><OfficeIcon letter="X" color="#1f8a3c" pale="#a4dcae" /></TaskButton>
    <TaskButton aria-label="Line" $running>
      <svg width="24" height="24" viewBox="0 0 24 24"><rect width="24" height="24" rx="4" fill="#0ab80a" /><path d="M12 4c12 0 11 11 3 15l-3 2v-3C-1 17 1 4 12 4z" fill="#fff" /><text x="12" y="13" textAnchor="middle" fontSize="5" fontWeight="bold" fontFamily="Open Sans, sans-serif" fill="#0ab80a">LINE</text></svg>
    </TaskButton>
    <TaskButton aria-label="HIP Series" $active><HipIcon size={24} /></TaskButton>
    <Tray>
      <Chevron dir="up" color="#fff" size={13} w={1} />
      <svg width="17" height="13" viewBox="0 0 17 13" fill="none" stroke="#fff"><path d="M5.500 3.500h10v7h-10v-3M16.500 5v4" /><path d="M8 5h6v4H8z" fill="#fff" /><path d="M1 3.500h4v2q-2 2-4 0zM2 1v2M4 1v2M3 7v4h3" /></svg>
      <svg width="14" height="14" viewBox="0 0 14 14" fill="none" stroke="#fff"><path d="M1 12A11 11 0 0 1 12 1M4 12.500a8 8 0 0 1 8-8M7 12.500a5 5 0 0 1 5-5" /><circle cx="11" cy="12" r="1.500" fill="#fff" /></svg>
      <svg width="15" height="12" viewBox="0 0 15 12" fill="none" stroke="#fff"><path d="M.5 4h2L6 1v10L2.500 8h-2zM9 4l4 4M13 4L9 8" /></svg>
      <svg width="17" height="16" viewBox="0 0 17 16" fill="none" stroke="#fff"><path d="M.5.5h16v12H9l-3 3v-3H.5zM3 3.500h10M3 6.500h10M3 9.500h7" /></svg>
      <span>ENG</span>
      <Clock>18:17<br />21/6/2559</Clock>
      <svg width="32" height="24" viewBox="0 0 32 24" fill="none" stroke="#fff" strokeWidth="1.800"><path d="M7 21a5 5 0 0 1-1-10c1-7 11-9 14-2 7-1 7 12 1 12zM17 6c3-7 10-4 10 1 4 1 5 7 0 9" /></svg>
    </Tray>
  </TaskBar>
);

export default function App() {
  return (
    <Desktop>
      <GlobalStyle />
      <TitleBar>
        <HipIcon />
        <span>{"HIP Premium Time (Build 20/06/2016) V 2.0.4    ผู้ใช้ระบบขณะนี้  : Supervisor"}</span>
        <WindowButtons>
          <WindowButton aria-label="Minimize"><svg width="10" height="10" viewBox="0 0 10 10" stroke="#777"><path d="M0 5.500h10" /></svg></WindowButton>
          <WindowButton aria-label="Restore"><svg width="10" height="10" viewBox="0 0 10 10" fill="none" stroke="#777"><path d="M.5 2.500h7v7h-7zM2.500 2.500v-2h7v7h-2" /></svg></WindowButton>
          <WindowButton aria-label="Close"><Cross size={10} color="#777" /></WindowButton>
        </WindowButtons>
      </TitleBar>
      <MenuBar><MenuItem>ข้อมูล</MenuItem><MenuItem>ช่วยเหลือ</MenuItem></MenuBar>
      <ToolBar>
        <Tool $w={88}>{toolIcons.clock}เครื่องบันทึกเวลา</Tool>
        <Tool $w={90}>{toolIcons.monitor}Realtime Monitor</Tool>
        <Tool $w={64}>{toolIcons.usb}นำเข้า USB<Badge $x={34} $y={-23}>1</Badge></Tool>
        <ToolSeparator />
        <Tool $w={86}>{toolIcons.people}ระเบียนพนักงาน</Tool>
        <Tool $w={60}>{toolIcons.time}เวลาทำงาน</Tool>
        <Tool $w={72}>{toolIcons.calendar}ตั้งตารางเวลา</Tool>
        <ToolArrow aria-label="More"><Caret /></ToolArrow>
        <Tool $w={94}>{toolIcons.notes}คำนวนเวลาทำงาน</Tool>
        <Tool $w={42}>{toolIcons.pie}รายงาน</Tool>
        <Tool $w={90}>{toolIcons.admin}ตั้งค่าผู้ดูแลระบบ</Tool>
      </ToolBar>
      <Workspace>
        <Tree />
        <ImportPanel />
      </Workspace>
      <StatusBar>Copyright© 2014 HIP GLOBAL Co.,Ltd. All Rights Reserved</StatusBar>
      <SystemTaskBar />
      <OpenDialog />
    </Desktop>
  );
}
